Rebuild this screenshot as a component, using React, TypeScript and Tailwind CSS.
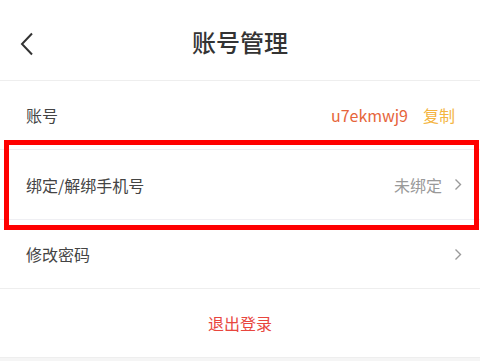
import React from 'react';

const font = { fontFamily: '"Noto Sans CJK SC", "Noto Sans", sans-serif' };

const Chevron = () => (
  <svg width="8" height="13" viewBox="0 0 8 13" fill="none" className="ml-[12px]">
    <path d="M1.5 1.5L6.5 6.5L1.5 11.5" stroke="#9a9a9a" strokeWidth="1.4" />
  </svg>
);

export default function App() {
  return (
    <div className="relative min-h-[361px] w-[480px] bg-[#f5f5f5] text-[#333333]" style={font}>
      {/* header */}
      <div className="relative flex h-[81px] items-center justify-center border-b border-[#eeeeee] bg-white">
        <button className="absolute left-[20px] top-[32px]">
          <svg width="14" height="24" viewBox="0 0 14 24" fill="none">
            <path d="M12 1.5L2 12L12 22.5" stroke="#333333" strokeWidth="2" />
          </svg>
        </button>
        <h1 className="text-[24px] font-medium text-[#333333] pt-[4px]">账号管理</h1>
      </div>

      <div className="bg-white">
        <div className="flex h-[69px] items-center justify-between border-b border-[#efeff3] pl-[26px] pr-[25px] text-[16px]">
          <span className="text-[#444444]">账号</span>
          <div className="flex items-center">
            <span className="text-[#e6653b]">u7ekmwj9</span>
            <span className="ml-[15px] text-[#f4b440]">复制</span>
          </div>
        </div>
        <div className="flex h-[70px] items-center justify-between border-b border-[#efeff3] pl-[26px] pr-[18px] text-[16px]">
          <span className="text-[#444444]">绑定/解绑手机号</span>
          <div className="flex items-center">
            <span className="text-[#999999]">未绑定</span>
            <Chevron />
          </div>
        </div>
        <div className="flex h-[69px] items-center justify-between border-b border-[#eeeeee] pl-[26px] pr-[18px] text-[16px]">
          <span className="text-[#444444]">修改密码</span>
          <Chevron />
        </div>
      </div>

      <div className="flex h-[69px] items-center justify-center border-b border-[#eeeeee] bg-white text-[16px] text-[#e8463e]">
        退出登录
      </div>

      {/* annotation */}
      <div className="pointer-events-none absolute left-[4px] top-[140px] h-[90px] w-[475px] border-[5px] border-[#ff0000]" />
    </div>
  );
}
